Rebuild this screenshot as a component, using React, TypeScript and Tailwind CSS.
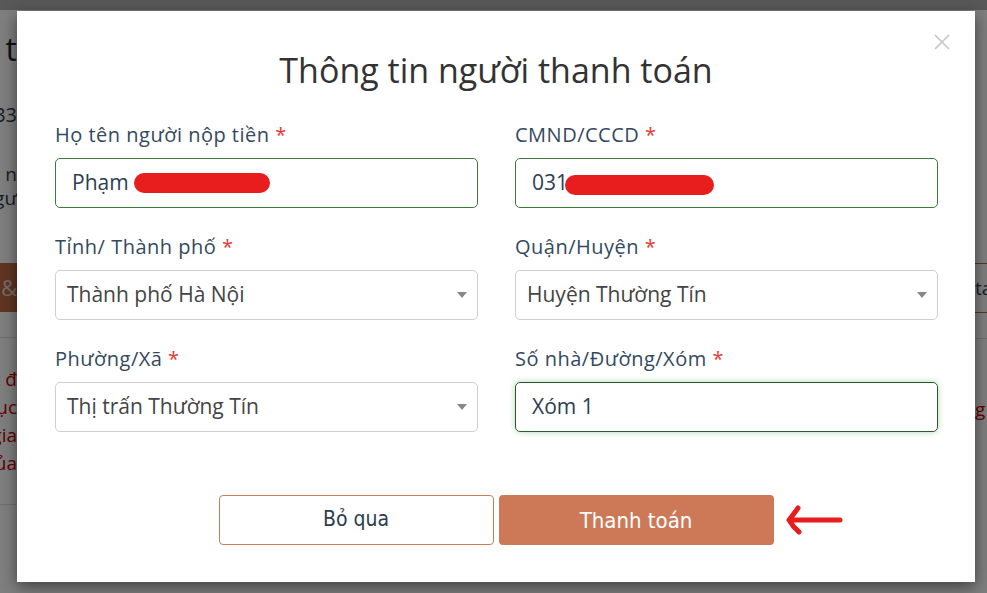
import React from "react";

const Req = () => <span className="text-[#e53935]"> *</span>;

function Caret() {
  return (
    <svg width="10" height="6" viewBox="0 0 10 6" className="shrink-0">
      <path d="M0 0 L10 0 L5 6 Z" fill="#888" />
    </svg>
  );
}

function Field({ label, children }: { label: string; children: React.ReactNode }) {
  return (
    <div className="flex flex-col">
      <div className="h-[26px] mt-[2px] mb-[10px] text-[20px] leading-[26px] tracking-[0.5px] text-[#34495e] whitespace-nowrap">
        {label}
        <Req />
      </div>
      {children}
    </div>
  );
}

function Redact({ w }: { w: number }) {
  return <span className="inline-block h-[20px] rounded-full bg-[#e81e1e] align-middle" style={{ width: w }} />;
}

export default function App() {
  return (
    <div className="relative w-[987px] h-[593px] overflow-hidden bg-white" style={{ fontFamily: "'Open Sans', 'Noto Sans', sans-serif" }}>
      {/* background page */}
      <div className="flex flex-col h-full">
        <div className="h-[10px] bg-[#b0b0b0]" />
        <div className="flex flex-1">
          <div className="w-[17px] flex flex-col overflow-hidden">
            <div className="mt-[22px] h-[34px] flex justify-end text-[32px] leading-[34px] text-[#1b2633] whitespace-nowrap">t</div>
            <div className="mt-[38px] h-[22px] flex justify-end text-[20px] leading-[22px] text-[#2c3e50] whitespace-nowrap">33</div>
            <div className="mt-[36px] flex justify-end text-[19px] leading-[24px] text-[#2c3e50] whitespace-nowrap">n</div>
            <div className="flex justify-end text-[19px] leading-[24px] text-[#2c3e50] whitespace-nowrap">gư</div>
            <div className="mt-[53px] h-[49px] bg-[#c06a44] flex justify-end items-center text-[22px] text-[#f0d8cc] whitespace-nowrap">&amp;</div>
            <div className="mt-[25px] h-px bg-[#ddd]" />
            <div className="mt-[27px] flex flex-col items-end text-[19px] leading-[28px] text-[#c00] whitespace-nowrap">
              <span>t đ</span>
              <span>tục</span>
              <span>gia</span>
              <span>ủa</span>
            </div>
            <div className="mt-[27px] h-px bg-[#ddd]" />
          </div>
          <div className="flex-1" />
          <div className="w-[12px] flex flex-col overflow-hidden">
            <div className="mt-[253px] h-[50px] border-y border-[#c06a44] flex items-center text-[19px] text-[#2c3e50] whitespace-nowrap">ta</div>
            <div className="mt-[25px] h-px bg-[#ddd]" />
            <div className="mt-[58px] text-[19px] leading-[24px] text-[#c00] whitespace-nowrap">g</div>
          </div>
        </div>
      </div>

      {/* overlay */}
      <div className="absolute inset-0 bg-black/50" />

      {/* modal */}
      <div className="absolute left-[17px] top-[11px] w-[958px] h-[571px] bg-white shadow-[0_5px_15px_rgba(0,0,0,0.5)] flex flex-col">
        <button className="absolute right-[25px] top-[23px]">
          <svg width="16" height="16" viewBox="0 0 16 16">
            <path d="M1 1 L15 15 M15 1 L1 15" stroke="#c4c4c4" strokeWidth="1.6" />
          </svg>
        </button>
        <h2 className="mt-[37px] text-center text-[34px] leading-[44px] text-[#333]">
          Thông tin người thanh toán
        </h2>
        <div className="mt-[28px] pl-[38px] pr-[37px] grid grid-cols-2 gap-x-[37px] gap-y-[24px]">
          <Field label="Họ tên người nộp tiền">
            <div className="h-[50px] rounded-[5px] border border-[#3f7a3c] flex items-center pl-[16px] text-[21px] text-[#2c3e50] gap-[5px]">
              <span>Phạm</span>
              <Redact w={136} />
            </div>
          </Field>
          <Field label="CMND/CCCD">
            <div className="h-[50px] rounded-[5px] border border-[#3f7a3c] flex items-center pl-[16px] text-[21px] text-[#2c3e50]">
              <span>031</span>
              <span className="-ml-[3px]"><Redact w={149} /></span>
            </div>
          </Field>
          <Field label="Tỉnh/ Thành phố">
            <div className="h-[50px] rounded-[5px] border border-[#cfcfcf] flex items-center justify-between pl-[11px] pr-[10px] text-[21px] text-[#444]">
              <span>Thành phố Hà Nội</span>
              <Caret />
            </div>
          </Field>
          <Field label="Quận/Huyện">
            <div className="h-[50px] rounded-[5px] border border-[#cfcfcf] flex items-center justify-between pl-[11px] pr-[10px] text-[21px] text-[#444]">
              <span>Huyện Thường Tín</span>
              <Caret />
            </div>
          </Field>
          <Field label="Phường/Xã">
            <div className="h-[50px] rounded-[5px] border border-[#cfcfcf] flex items-center justify-between pl-[11px] pr-[10px] text-[21px] text-[#444]">
              <span>Thị trấn Thường Tín</span>
              <Caret />
            </div>
          </Field>
          <Field label="Số nhà/Đường/Xóm">
            <div className="h-[50px] rounded-[5px] border border-[#2d5a2a] shadow-[0_0_6px_rgba(80,170,70,0.45)] flex items-center pl-[16px] text-[21px] text-[#2c3e50]">
              <span>Xóm 1</span>
            </div>
          </Field>
        </div>
        <div className="mt-[63px] flex justify-center gap-[5px]" style={{ fontFamily: "'DejaVu Sans Condensed', 'DejaVu Sans', sans-serif" }}>
          <button className="w-[275px] h-[50px] rounded-[4px] border border-[#d07b58] bg-white text-[21px] text-[#2c3e50]">Bỏ qua</button>
          <div className="relative">
            <button className="w-[275px] h-[50px] rounded-[4px] bg-[#cd7957] text-[22px] text-white">Thanh toán</button>
            <svg className="absolute left-[286px] top-[8px]" width="58" height="34" viewBox="0 0 58 34">
              <path d="M55 17 L5 17 M13 5 Q8 12 4 17 Q8 24 14 29" stroke="#e81e1e" strokeWidth="5" strokeLinecap="round" strokeLinejoin="round" fill="none" />
            </svg>
          </div>
        </div>
      </div>
    </div>
  );
}
